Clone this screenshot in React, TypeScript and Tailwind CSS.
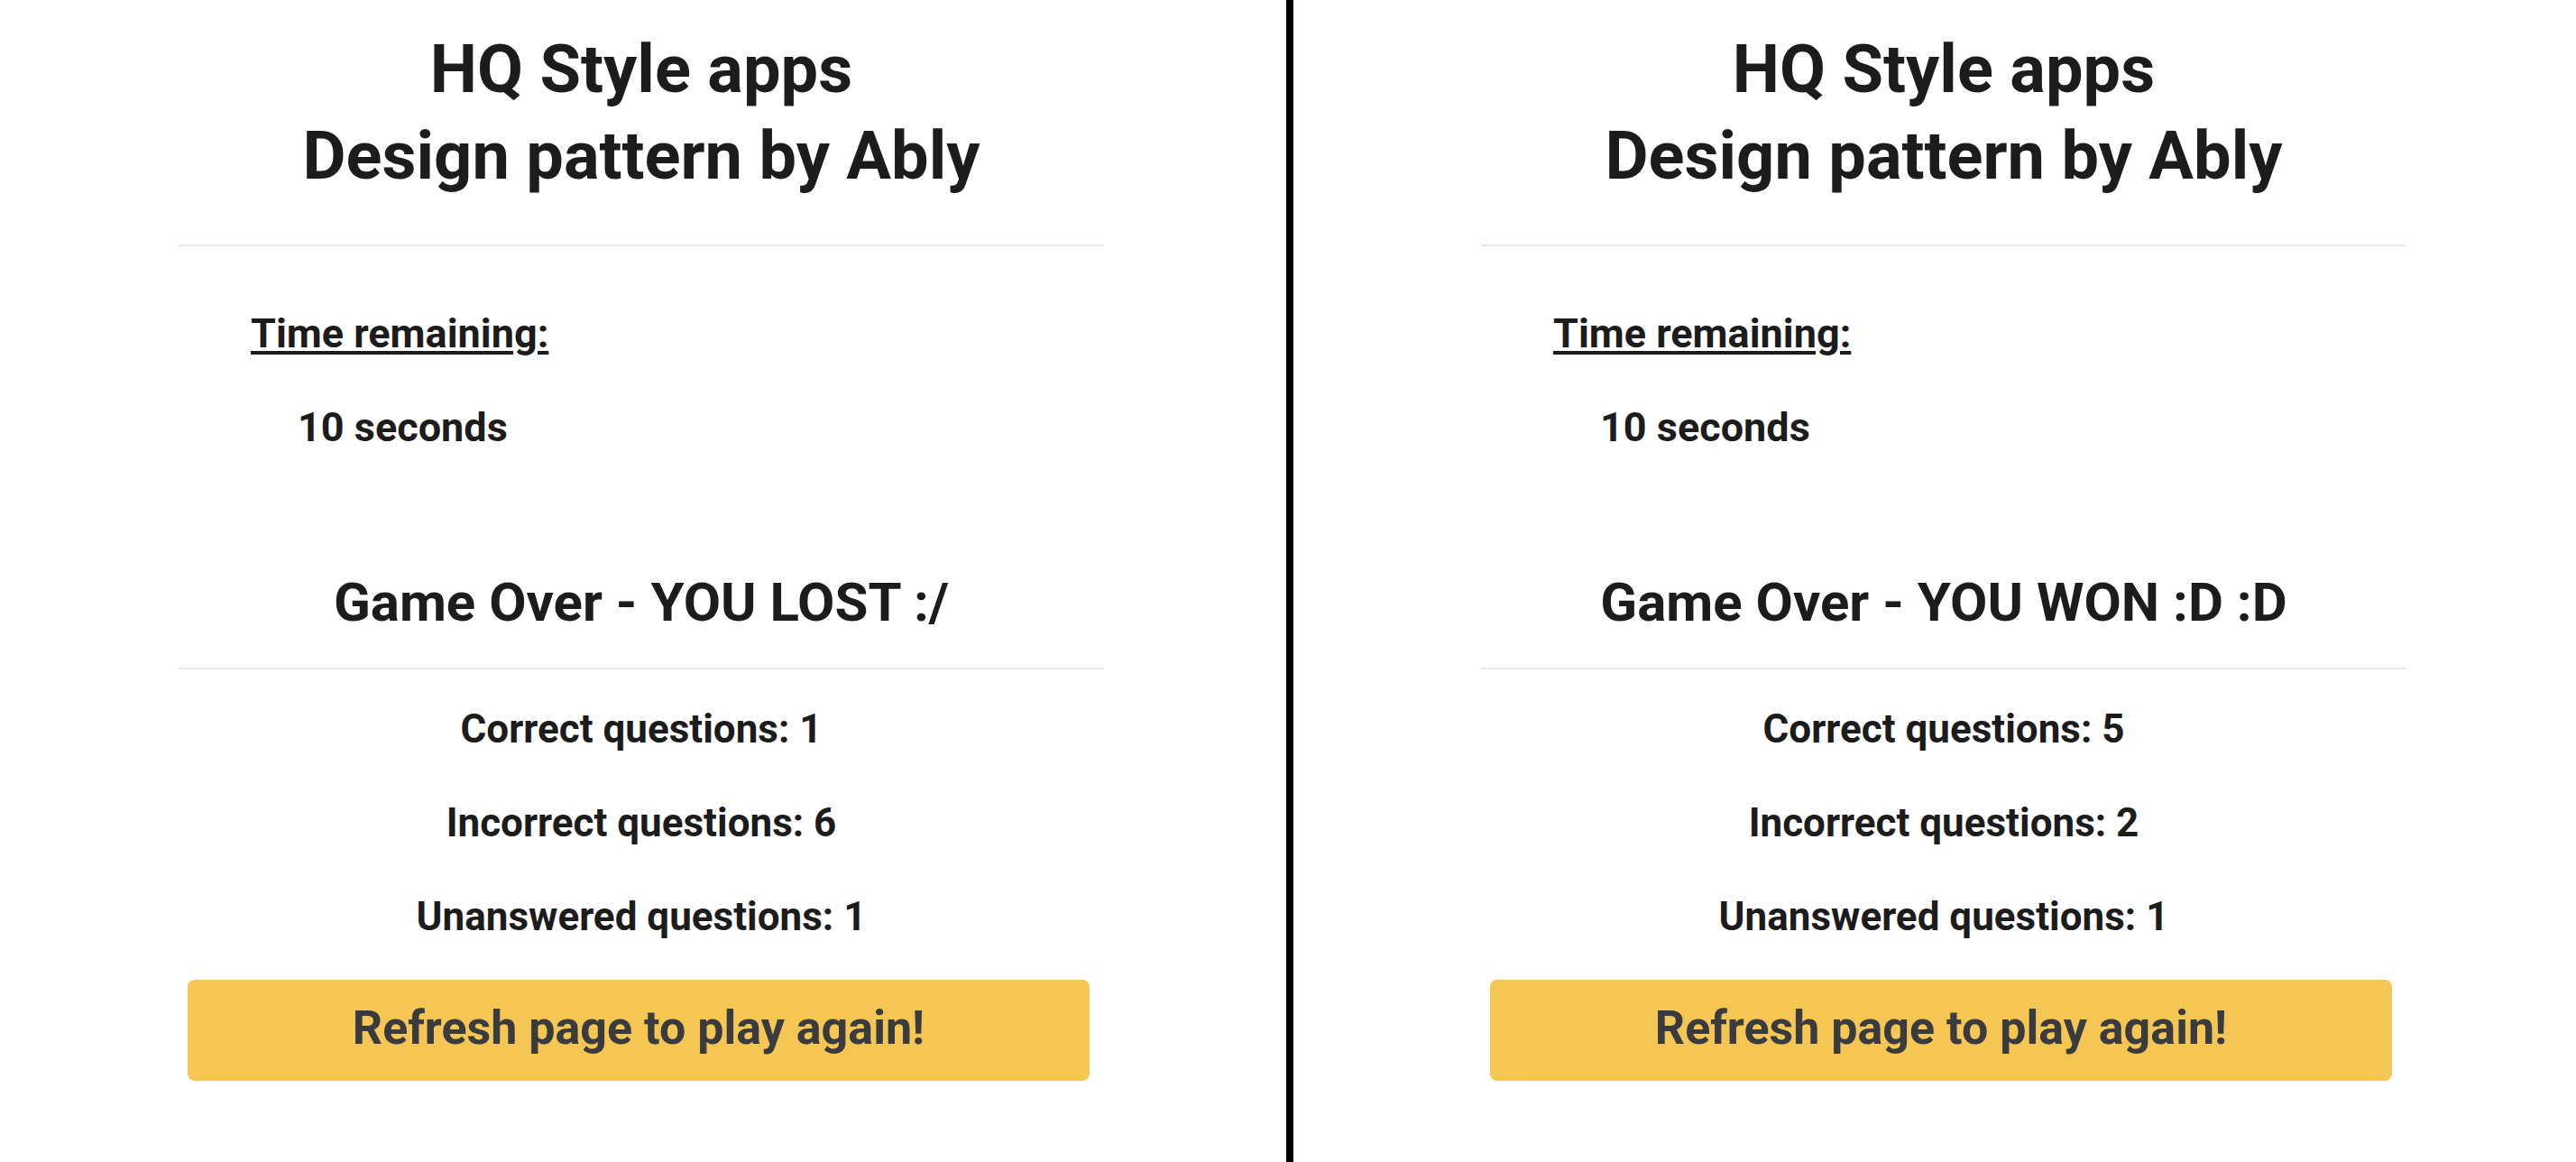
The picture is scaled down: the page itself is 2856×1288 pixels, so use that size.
import React from "react";

type PanelProps = {
  result: string;
  correct: number;
  incorrect: number;
  unanswered: number;
  offset: "left" | "right";
};

function Panel({ result, correct, incorrect, unanswered, offset }: PanelProps) {
  return (
    <div
      className={
        offset === "left"
          ? "w-[1026px] ml-[198px] flex flex-col"
          : "w-[1026px] ml-[208px] flex flex-col"
      }
    >
      <h1 className="mt-[29px] text-center text-[74px] leading-[96px] font-bold text-[#1c1c1c]">
        HQ Style apps
        <br />
        Design pattern by Ably
      </h1>
      <div className="mt-[50px] h-[2px] bg-[#e8e8e8]" />
      <div className="mt-[69px] pl-[80px] text-[45px] leading-[56px] font-bold text-[#1c1c1c]">
        <span className="underline decoration-[4px] underline-offset-[4px]">Time remaining:</span>
      </div>
      <div className="mt-[48px] pl-[132px] text-[45px] leading-[56px] font-bold text-[#1c1c1c]">
        10 seconds
      </div>
      <div className="mt-[130px] text-center text-[60px] leading-[72px] font-bold text-[#1c1c1c]">
        {result}
      </div>
      <div className="mt-[36px] h-[2px] bg-[#e8e8e8]" />
      <div className="mt-[38px] flex flex-col gap-[48px] text-center text-[44px] leading-[56px] font-bold text-[#1c1c1c]">
        <div>Correct questions: {correct}</div>
        <div>Incorrect questions: {incorrect}</div>
        <div>Unanswered questions: {unanswered}</div>
      </div>
      <button className="mt-[42px] ml-[10px] w-[1000px] h-[112px] pb-[5px] rounded-[8px] bg-[#f6c655] text-center text-[52px] leading-[100px] font-bold text-[#393b3f]">
        Refresh page to play again!
      </button>
    </div>
  );
}

export default function App() {
  return (
    <div
      className="flex h-[1288px] w-[2856px] bg-white overflow-hidden"
      style={{ fontFamily: "Roboto, 'Liberation Sans', sans-serif" }}
    >
      <div className="w-[1426px] shrink-0">
        <Panel result="Game Over - YOU LOST :/" correct={1} incorrect={6} unanswered={1} offset="left" />
      </div>
      <div className="w-[8px] shrink-0 bg-black" />
      <div className="flex-1">
        <Panel result="Game Over - YOU WON :D :D" correct={5} incorrect={2} unanswered={1} offset="right" />
      </div>
    </div>
  );
}
